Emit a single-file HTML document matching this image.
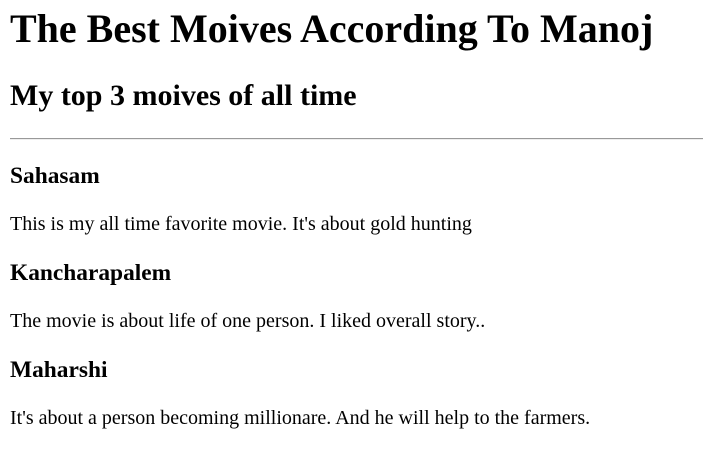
<!DOCTYPE html>
<html><head><meta charset="utf-8"><style>
html{zoom:1.25}
body{margin:4px 0 8px 8px;font-family:"Liberation Serif",serif;font-size:16px;color:#000;background:#fff}
h1{font-size:2em;margin:0 0 0.67em}
h2{font-size:1.5em;margin:0.83em 0}
h3{font-size:1.17em;margin:1em 0}
p{margin:1em 0}
hr{border:none;border-top:1px solid #999;border-bottom:1px solid #eee;margin:4px 0 10px}
</style></head><body>
<h1>The Best Moives According To Manoj</h1>
<h2>My top 3 moives of all time</h2>
<hr>
<h3>Sahasam</h3>
<p>This is my all time favorite movie. It's about gold hunting</p>
<h3>Kancharapalem</h3>
<p>The movie is about life of one person. I liked overall story..</p>
<h3>Maharshi</h3>
<p>It's about a person becoming millionare. And he will help to the farmers.</p>
</body></html>
